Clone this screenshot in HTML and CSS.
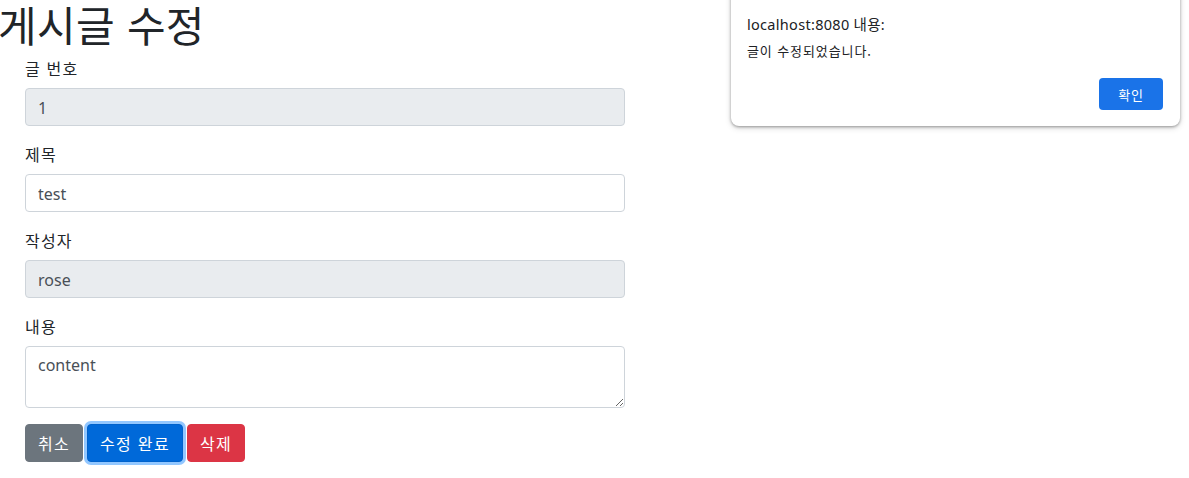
FILE: index.html
```html
<!DOCTYPE html>
<html lang="ko">
<head>
<meta charset="utf-8">
<title>게시글 수정</title>
<link rel="stylesheet" href="styles.css">
</head>
<body>
<h1 class="title">게시글 수정</h1>
<form class="edit-form">
  <div class="form-group">
    <label class="form-label">글 번호</label>
    <input class="form-control" type="text" value="1" readonly>
  </div>
  <div class="form-group">
    <label class="form-label">제목</label>
    <input class="form-control" type="text" value="test">
  </div>
  <div class="form-group">
    <label class="form-label">작성자</label>
    <input class="form-control" type="text" value="rose" readonly>
  </div>
  <div class="form-group">
    <label class="form-label">내용</label>
    <textarea class="form-control textarea" rows="2">content</textarea>
  </div>
  <div class="actions">
    <button type="button" class="btn btn-secondary">취소</button>
    <button type="button" class="btn btn-primary focused">수정 완료</button>
    <button type="button" class="btn btn-danger">삭제</button>
  </div>
</form>

<div class="alert-dialog">
  <div class="alert-title">localhost:8080 내용:</div>
  <div class="alert-message">글이 수정되었습니다.</div>
  <div class="alert-actions">
    <button type="button" class="alert-ok">확인</button>
  </div>
</div>
</body>
</html>
```
FILE: styles.css
```css
* { box-sizing: border-box; }
html, body {
  margin: 0;
  padding: 0;
  background: #fff;
  overflow: hidden;
}
body {
  font-family: "Noto Sans", "Noto Sans CJK KR", sans-serif;
  font-size: 16px;
  line-height: 1.5;
  color: #212529;
  position: relative;
  min-height: 478px;
}
.title {
  margin: 0 0 8px -2px;
  height: 48px;
  font-size: 42px;
  font-weight: 400;
  line-height: 48px;
  letter-spacing: 0.3px;
  font-family: "Noto Sans CJK KR", sans-serif;
}
.edit-form {
  width: 600px;
  margin-left: 25px;
}
.form-group {
  margin-bottom: 16px;
}
.form-label {
  display: block;
  margin-bottom: 8px;
  font-family: "Noto Sans CJK KR", sans-serif;
  font-size: 16px;
  line-height: 24px;
  height: 24px;
  letter-spacing: 1.2px;
}
.form-control {
  display: block;
  width: 100%;
  height: 38px;
  padding: 7px 12px 5px;
  font-family: "Noto Sans", "Noto Sans CJK KR", sans-serif;
  font-size: 16px;
  line-height: 24px;
  color: #495057;
  background: #fff;
  border: 1px solid #ced4da;
  border-radius: 4px;
  outline: none;
}
.form-control[readonly] {
  background: #e9ecef;
}
.textarea {
  height: 62px;
  padding: 6px 12px;
  resize: vertical;
}
.actions {
  display: flex;
  gap: 4px;
}
.btn {
  height: 38px;
  padding: 6px 12px;
  font-family: "Noto Sans CJK KR", sans-serif;
  font-size: 16px;
  line-height: 24px;
  letter-spacing: 1.3px;
  white-space: nowrap;
  color: #fff;
  border: 1px solid transparent;
  border-radius: 4px;
}
.btn-secondary { background: #6c757d; border-color: #6c757d; }
.btn-primary { background: #007bff; border-color: #007bff; }
.btn-primary.focused {
  background: #0069d9;
  border-color: #0062cc;
  box-shadow: 0 0 0 3px rgba(38, 143, 255, 0.5);
}
.btn-danger { background: #dc3545; border-color: #dc3545; }

.alert-dialog {
  position: absolute;
  left: 731px;
  top: -20px;
  width: 449px;
  height: 146px;
  background: #fff;
  border-radius: 8px;
  box-shadow: 0 1px 3px rgba(0,0,0,0.35), 0 2px 6px rgba(0,0,0,0.15);
  padding: 33px 16px 0 16px;
  display: flex;
  flex-direction: column;
}
.alert-title {
  font-family: "Noto Sans", "Noto Sans CJK KR", sans-serif;
  font-size: 14.5px;
  line-height: 22px;
  letter-spacing: 0.3px;
  color: #202124;
}
.alert-message {
  margin-top: 6px;
  font-family: "Noto Sans CJK KR", sans-serif;
  font-size: 13px;
  line-height: 20px;
  letter-spacing: 0.9px;
  color: #202124;
}
.alert-actions {
  display: flex;
  justify-content: flex-end;
  margin-top: 17px;
}
.alert-ok {
  width: 64px;
  height: 32px;
  background: #1a73e8;
  color: #fff;
  border: none;
  border-radius: 4px;
  font-family: "Noto Sans CJK KR", sans-serif;
  font-size: 13px;
  letter-spacing: 0.8px;
  margin-right: 1px;
}
```
